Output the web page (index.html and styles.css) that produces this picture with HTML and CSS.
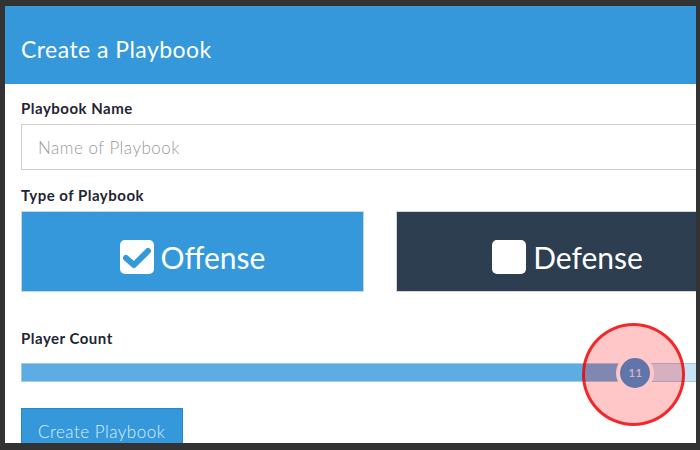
FILE: index.html
```html
<!DOCTYPE html>
<html lang="en">
<head>
<meta charset="utf-8">
<title>Create a Playbook</title>
<link rel="stylesheet" href="styles.css">
</head>
<body>
<div class="frame">
  <div class="modal">
    <div class="header">
      <h1 class="title">Create a Playbook</h1>
    </div>
    <div class="content">
      <label class="label label-name">Playbook Name</label>
      <input class="text-input" type="text" placeholder="Name of Playbook">

      <label class="label label-type">Type of Playbook</label>
      <div class="type-row">
        <button class="type-btn offense">
          <svg class="check-icon" width="34" height="34" viewBox="0 0 34 34">
            <rect x="0" y="0" width="34" height="34" rx="5" ry="5" fill="#ffffff"/>
            <path d="M6 18 L14 25 L28 11" fill="none" stroke="#3498db" stroke-width="6" stroke-linecap="round" stroke-linejoin="round"/>
          </svg>
          <span class="type-text">Offense</span>
        </button>
        <button class="type-btn defense">
          <svg class="check-icon" width="34" height="34" viewBox="0 0 34 34">
            <rect x="0" y="0" width="34" height="34" rx="5" ry="5" fill="#ffffff"/>
          </svg>
          <span class="type-text">Defense</span>
        </button>
      </div>

      <label class="label label-count">Player Count</label>
      <div class="slider">
        <div class="slider-fill" style="width: 85.65%"></div>
        <div class="slider-thumb" style="left: 85.65%">11</div>
        <div class="touch-mark" style="left: 85.4%"></div>
      </div>

      <button class="create-btn">Create Playbook</button>
    </div>
  </div>
</div>
</body>
</html>
```

FILE: styles.css
```css
html, body {
  margin: 0;
  padding: 0;
  width: 700px;
  height: 450px;
  overflow: hidden;
  background: #333333;
}

.frame {
  box-sizing: border-box;
  width: 700px;
  height: 450px;
  padding: 6px 4px 7px 5px;
}

.modal {
  height: 437px;
  background: #ffffff;
  overflow: hidden;
  font-family: Lato, "Open Sans", sans-serif;
}

.header {
  box-sizing: border-box;
  height: 78px;
  background: #3498db;
  display: flex;
  align-items: center;
  padding: 8px 0 0 16px;
}

.title {
  margin: 0;
  font-size: 23px;
  font-weight: 400;
  line-height: 28px;
  letter-spacing: 0.45px;
  color: #ffffff;
}

.content {
  box-sizing: border-box;
  width: 734px;
  padding: 0 0 0 16px;
  display: flex;
  flex-direction: column;
  align-items: flex-start;
}

.label {
  display: block;
  font-size: 15px;
  font-weight: 700;
  line-height: 18px;
  letter-spacing: 0.5px;
  color: #1f2633;
}

.label-name {
  margin-top: 15px;
  margin-bottom: 7px;
}

.text-input {
  box-sizing: border-box;
  width: 718px;
  height: 46px;
  margin: 0;
  padding: 0 16px;
  border: 1px solid #cfcfcf;
  font-family: Lato, "Open Sans", sans-serif;
  font-size: 17px;
  font-weight: 300;
  letter-spacing: 0.5px;
  color: #333;
  outline: none;
}

.text-input::placeholder {
  color: #999999;
  opacity: 1;
}

.label-type {
  margin-top: 16px;
  margin-bottom: 7px;
}

.type-row {
  display: flex;
  gap: 32px;
  width: 718px;
}

.type-btn {
  box-sizing: border-box;
  width: 343px;
  height: 81px;
  padding: 11px 0 0;
  margin: 0;
  border: 1px solid #c9d6e2;
  display: flex;
  align-items: center;
  justify-content: center;
  gap: 7px;
  font-family: Lato, "Open Sans", sans-serif;
  color: #ffffff;
  cursor: pointer;
}

.offense {
  background: #3498db;
}

.defense {
  background: #2c3e50;
  border-color: #d3d7dc;
}

.check-icon {
  display: block;
  flex: none;
}

.type-text {
  font-size: 30px;
  line-height: 36px;
  font-weight: 400;
}

.label-count {
  margin-top: 37px;
  margin-bottom: 16px;
}

.slider {
  position: relative;
  box-sizing: border-box;
  width: 718px;
  height: 19px;
  background: #c9e3f6;
  border: 1px solid #9ccbee;
}

.slider-fill {
  height: 100%;
  background: #5dade2;
}

.slider-thumb {
  position: absolute;
  top: 50%;
  width: 30px;
  height: 30px;
  margin: -15px 0 0 -15px;
  border-radius: 50%;
  background: #3498db;
  box-shadow: 0 0 0 4px #ffffff;
  color: #e6ecf8;
  font-size: 12px;
  line-height: 30px;
  text-align: center;
}

.touch-mark {
  position: absolute;
  top: 50%;
  box-sizing: border-box;
  width: 103px;
  height: 103px;
  margin: -50px 0 0 -51px;
  border-radius: 50%;
  background: rgba(255, 0, 0, 0.22);
  border: 3px solid rgba(240, 0, 0, 0.8);
}

.create-btn {
  box-sizing: border-box;
  width: 162px;
  height: 44px;
  margin-top: 26px;
  padding: 11px 0 0 16px;
  border: 1px solid #2a86c6;
  background: #3498db;
  color: #dcefff;
  font-family: Lato, "Open Sans", sans-serif;
  font-size: 17px;
  font-weight: 300;
  line-height: 24px;
  letter-spacing: 0.5px;
  text-align: left;
  display: flex;
  align-items: flex-start;
}
```
